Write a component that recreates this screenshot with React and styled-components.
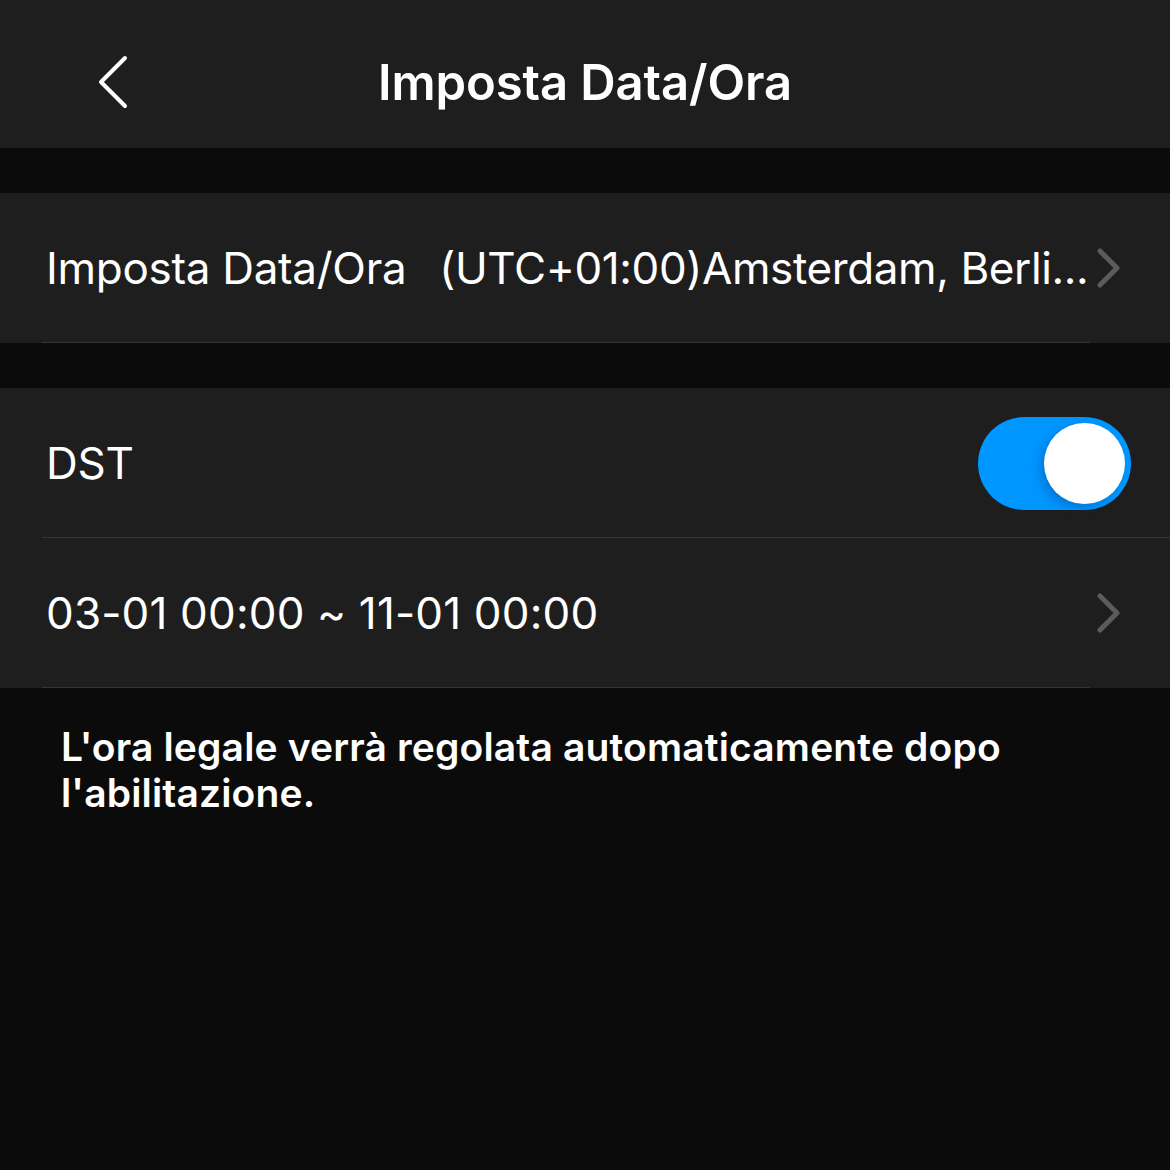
import React from "react";
import styled, { createGlobalStyle } from "styled-components";

const Global = createGlobalStyle`
  html, body { margin: 0; padding: 0; background: #0b0b0b; }
  body { font-family: Inter, "Noto Sans", "Liberation Sans", sans-serif; color: #fff; }
`;

const Page = styled.div`
  width: 1170px;
  min-height: 1170px;
  background: #0b0b0b;
  display: flex;
  flex-direction: column;
`;

const Header = styled.header`
  height: 148px;
  box-sizing: border-box;
  padding-top: 16px;
  background: #1e1e1e;
  display: grid;
  grid-template-columns: 200px 1fr 200px;
  align-items: center;
`;

const BackButton = styled.button`
  background: none;
  border: none;
  padding: 0 0 0 96px;
  display: flex;
  align-items: center;
  height: 100%;
  cursor: pointer;
`;

const Title = styled.h1`
  margin: 0;
  text-align: center;
  font-size: 49px;
  font-weight: 600;
  letter-spacing: -0.1px;
  color: #fff;
`;

const Group = styled.section`
  margin-top: 45px;
  background: #1e1e1e;
  display: flex;
  flex-direction: column;
`;

const Row = styled.div`
  height: 150px;
  display: flex;
  align-items: center;
  padding: 0 40px 0 46px;
  position: relative;
  box-sizing: border-box;
  &::after {
    content: "";
    position: absolute;
    left: 42px;
    right: ${(p) => (p.$fullLine ? "0" : "80px")};
    bottom: 0;
    height: 1px;
    background: #343434;
  }
`;

const Label = styled.span`
  font-size: 44px;
  font-weight: 400;
  color: #fff;
  white-space: nowrap;
  letter-spacing: ${(p) => (p.$wide ? "0.15px" : "-0.3px")};
`;

const Value = styled.span`
  flex: 1;
  min-width: 0;
  margin-left: 33px;
  font-size: 44px;
  color: #fff;
  white-space: nowrap;
  letter-spacing: -0.4px;
`;

const Spacer = styled.span`
  flex: 1;
`;

const Chevron = styled.svg`
  width: 26px;
  height: 40px;
  flex: none;
  margin-left: 4px;
  margin-right: 8px;
`;

const Toggle = styled.div`
  width: 153px;
  height: 93px;
  border-radius: 47px;
  background: #0096ff;
  display: flex;
  align-items: center;
  justify-content: flex-end;
  padding-right: 6px;
  box-sizing: border-box;
  margin-right: -1px;
`;

const Knob = styled.div`
  width: 81px;
  height: 81px;
  border-radius: 50%;
  background: #fff;
  box-shadow: -4px 4px 10px rgba(0, 60, 140, 0.35);
`;

const Note = styled.p`
  margin: 36px 0 0;
  padding: 0 120px 0 61px;
  font-size: 39px;
  font-weight: 600;
  line-height: 46px;
  color: #fff;
  letter-spacing: 0.15px;
`;

const ChevronRight = () => (
  <Chevron viewBox="0 0 26 40">
    <path d="M4 3 L21 20 L4 37" fill="none" stroke="#5c5c5c" strokeWidth="5" strokeLinecap="round" strokeLinejoin="round" />
  </Chevron>
);

export default function App() {
  return (
    <Page>
      <Global />
      <Header>
        <BackButton aria-label="Indietro">
          <svg width="34" height="54" viewBox="0 0 34 54">
            <path d="M29 3 L5 27 L29 51" fill="none" stroke="#fff" strokeWidth="4" strokeLinecap="round" strokeLinejoin="round" />
          </svg>
        </BackButton>
        <Title>Imposta Data/Ora</Title>
        <div />
      </Header>

      <Group>
        <Row>
          <Label>Imposta Data/Ora</Label>
          <Value>(UTC+01:00)Amsterdam, Berli...</Value>
          <ChevronRight />
        </Row>
      </Group>

      <Group>
        <Row $fullLine>
          <Label>DST</Label>
          <Spacer />
          <Toggle>
            <Knob />
          </Toggle>
        </Row>
        <Row>
          <Label $wide>03-01 00:00 ~ 11-01 00:00</Label>
          <Spacer />
          <ChevronRight />
        </Row>
      </Group>

      <Note>L'ora legale verrà regolata automaticamente dopo l'abilitazione.</Note>
    </Page>
  );
}
